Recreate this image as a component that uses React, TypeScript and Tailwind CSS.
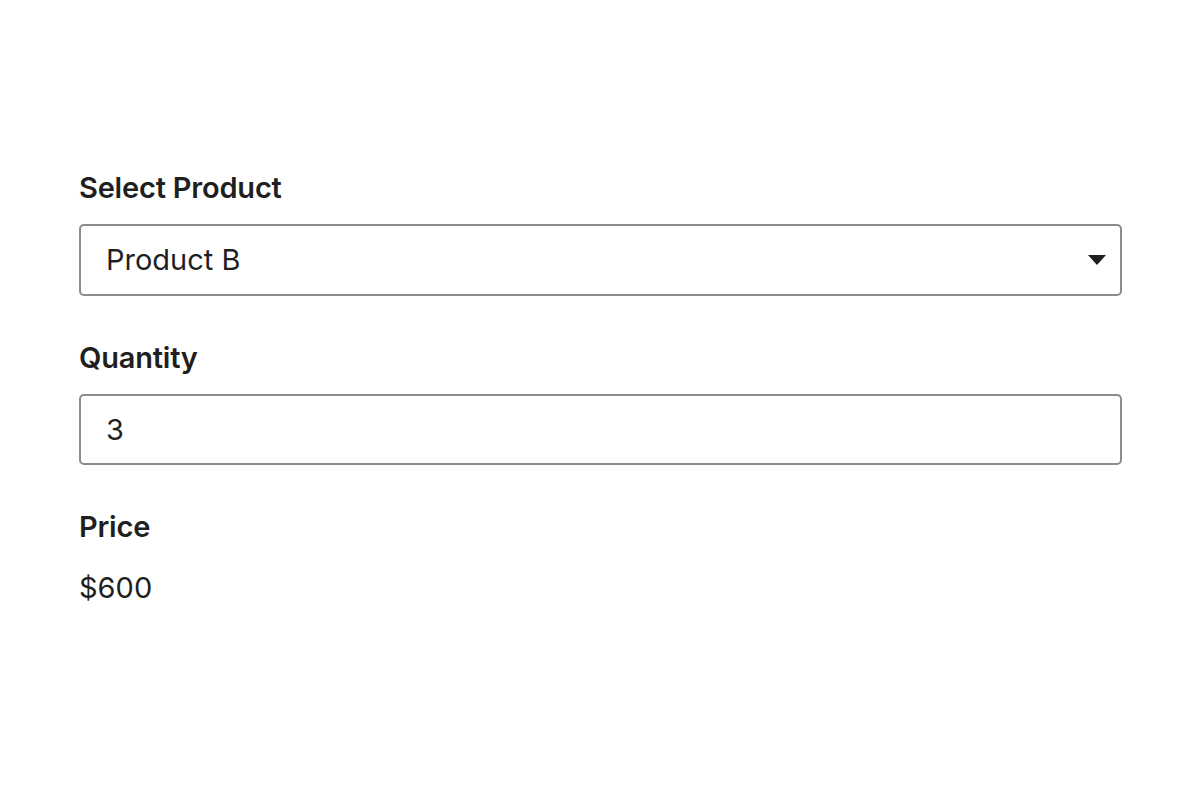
import { useState } from "react";

function App() {
    const [product, setProduct] = useState("B");
    const [qty, setQty] = useState("3");
    const prices: Record<string, number> = { A: 100, B: 200, C: 300 };
    const total = prices[product] * (parseInt(qty) || 0);

    return (
        <div className="min-h-screen bg-white text-[#1f1f1f] font-['Inter',sans-serif]">
            <div className="pl-[79px] pr-[78px] pt-[170px]">
                <label className="block text-[29px] font-semibold leading-[36px] tracking-[-0.2px]">Select Product</label>
                <div className="relative mt-[18px]">
                    <select
                        value={product}
                        onChange={(e) => setProduct(e.target.value)}
                        className="appearance-none w-full h-[72px] border-2 border-[#8c8c8c] rounded-[5px] bg-white pl-[25px] text-[29px] outline-none"
                    >
                        <option value="A">Product A</option>
                        <option value="B">Product B</option>
                        <option value="C">Product C</option>
                    </select>
                    <svg className="absolute right-[16px] top-[31px] pointer-events-none" width="18" height="11" viewBox="0 0 18 11">
                        <path d="M0 0 H18 L9 10 Z" fill="#1f1f1f" />
                    </svg>
                </div>

                <label className="block text-[29px] font-semibold leading-[36px] tracking-[-0.2px] mt-[44px]">Quantity</label>
                <input
                    value={qty}
                    onChange={(e) => setQty(e.target.value)}
                    className="block mt-[18px] w-full h-[71px] border-2 border-[#8c8c8c] rounded-[5px] pl-[25px] text-[29px] outline-none"
                />

                <div className="text-[29px] font-semibold leading-[36px] tracking-[-0.2px] mt-[44px]">Price</div>
                <div className="text-[29px] leading-[36px] mt-[25px]">${total}</div>
            </div>
        </div>
    );
}

export default App
